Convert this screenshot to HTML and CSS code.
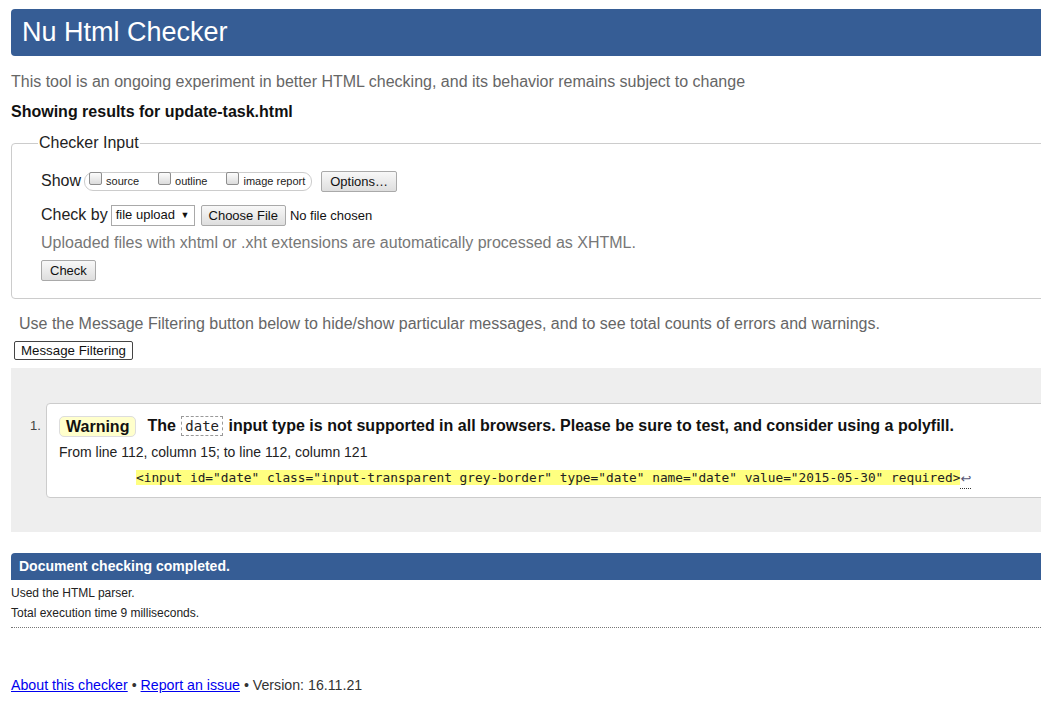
FILE: index.html
```html
<!DOCTYPE html>
<html lang="en">
<head>
<meta charset="utf-8">
<title>Nu Html Checker</title>
<link rel="stylesheet" href="styles.css">
</head>
<body>
<div class="page">
  <h1 class="title">Nu Html Checker</h1>
  <p class="intro">This tool is an ongoing experiment in better HTML checking, and its behavior remains subject to change</p>
  <p class="showing">Showing results for update-task.html</p>

  <fieldset class="input-box">
    <legend>Checker Input</legend>
    <div class="row show-row">
      <span class="lbl">Show</span>
      <span class="opts">
        <span class="opt"><span class="cb"></span>source</span>
        <span class="opt"><span class="cb"></span>outline</span>
        <span class="opt"><span class="cb"></span>image report</span>
      </span>
      <span class="btn">Options…</span>
    </div>
    <div class="row by-row">
      <span class="lbl">Check by</span>
      <span class="select">file upload <span class="arrow">▼</span></span>
      <span class="btn choose">Choose File</span>
      <span class="nofile">No file chosen</span>
    </div>
    <p class="hint">Uploaded files with xhtml or .xht extensions are automatically processed as XHTML.</p>
    <span class="btn check">Check</span>
  </fieldset>

  <p class="filter-note">Use the Message Filtering button below to hide/show particular messages, and to see total counts of errors and warnings.</p>
  <span class="btn-filter">Message Filtering</span>

  <div class="results">
    <div class="item">
      <span class="num">1.</span>
      <div class="card">
        <p class="msg"><span class="badge">Warning</span> <span class="msg-text">The <code class="tag">date</code> input type is not supported in all browsers. Please be sure to test, and consider using a polyfill.</span></p>
        <p class="loc">From line 112, column 15; to line 112, column 121</p>
        <p class="extract"><span class="hl">&lt;input id="date" class="input-transparent grey-border" type="date" name="date" value="2015-05-30" required&gt;</span><span class="ret">↩</span></p>
      </div>
    </div>
  </div>

  <div class="done">Document checking completed.</div>
  <p class="stat">Used the HTML parser.</p>
  <p class="stat">Total execution time 9 milliseconds.</p>
  <div class="dots"></div>

  <p class="footer"><a href="#">About this checker</a> • <a href="#">Report an issue</a> • Version: 16.11.21</p>
</div>
</body>
</html>
```

FILE: styles.css
```css
html, body {
  margin: 0;
  padding: 0;
  overflow: hidden;
  background: #fff;
}

body {
  font-family: "Liberation Sans", Arial, sans-serif;
  color: #222;
}

.page {
  width: 1080px;
  margin-left: 11px;
  padding-top: 9px;
}

.title {
  margin: 0;
  height: 47px;
  line-height: 47px;
  padding-left: 11px;
  background: #365d95;
  color: #fff;
  font-size: 27px;
  font-weight: normal;
  border-radius: 4px;
}

.intro {
  margin: 17px 0 0;
  font-size: 16px;
  line-height: 18px;
  color: #666;
}

.showing {
  margin: 12px 0 0;
  font-size: 16px;
  line-height: 18px;
  font-weight: bold;
  color: #111;
}

.input-box {
  margin: 13px 0 0;
  padding: 8px 0 17px 29px;
  border: 1px solid #ccc;
  border-radius: 4px;
}

.input-box legend {
  font-size: 16px;
  color: #222;
  padding: 0 1px;
  margin-left: -3px;
  line-height: 18px;
}

.row {
  display: flex;
  align-items: center;
  font-size: 16px;
  color: #222;
}

.show-row {
  height: 22px;
  margin-top: 10px;
}

.lbl {
  margin-right: 3px;
}

.opts {
  display: inline-flex;
  align-items: center;
  height: 17px;
  border: 1px solid #ccc;
  border-radius: 9px;
  padding: 0 6px 0 4px;
  gap: 19px;
  margin-right: 9px;
}

.opt {
  display: inline-flex;
  align-items: center;
  font-size: 11px;
  color: #222;
  gap: 4px;
}

.cb {
  display: inline-block;
  width: 11px;
  height: 11px;
  border: 1px solid #8e8e8e;
  border-radius: 2px;
  background: linear-gradient(#fcfcfc, #dcdcdc);
  position: relative;
  top: -3px;
}

.btn {
  display: inline-block;
  font-size: 13px;
  line-height: 19px;
  padding: 0 8px;
  border: 1px solid #a9a9a9;
  border-radius: 2px;
  background: linear-gradient(#f8f8f8, #dedede);
  color: #111;
}

.by-row {
  height: 22px;
  margin-top: 12px;
}

.select {
  display: inline-block;
  font-size: 13px;
  line-height: 17px;
  border: 1px solid #a9a9a9;
  background: #fff;
  padding: 0 4px;
  margin-right: 6px;
  color: #111;
}

.arrow {
  font-size: 9px;
  margin-left: 2px;
  position: relative;
  top: -1px;
}

.choose {
  margin-right: 4px;
  padding: 0 7px;
}

.nofile {
  font-size: 13px;
  color: #111;
}

.hint {
  margin: 8px 0 0;
  font-size: 16px;
  line-height: 18px;
  color: #777;
}

.check {
  margin-top: 8px;
}

.filter-note {
  margin: 16px 0 0 8px;
  font-size: 16px;
  line-height: 18px;
  color: #666;
}

.btn-filter {
  display: inline-block;
  margin: 8px 0 0 3px;
  font-size: 13.3px;
  line-height: 17px;
  padding: 0 6px;
  border: 1px solid #444;
  border-radius: 2px;
  background: #fff;
  color: #111;
}

.results {
  margin-top: 8px;
  background: #eee;
  padding: 35px 0 34px 19px;
}

.item {
  display: flex;
  align-items: flex-start;
}

.num {
  width: 16px;
  font-size: 13px;
  line-height: 16px;
  color: #444;
  margin-top: 15px;
}

.card {
  flex: 1;
  background: #fff;
  border: 1px solid #ccc;
  border-radius: 4px;
  padding: 11px 0 8px 12px;
}

.msg {
  margin: 0;
  font-size: 16px;
  line-height: 22px;
  font-weight: bold;
  color: #111;
  display: flex;
  align-items: center;
}

.badge {
  display: inline-block;
  background: #ffffcc;
  border: 1px solid #ddd;
  border-radius: 5px;
  padding: 0 6px;
  line-height: 19px;
  margin-right: 11px;
}

.tag {
  font-family: "DejaVu Sans Mono", "Liberation Mono", monospace;
  font-weight: normal;
  font-size: 14px;
  border: 1px dashed #999;
  padding: 1px 3px;
  margin: 0 1px;
  color: #222;
}

.loc {
  margin: 7px 0 0;
  font-size: 14px;
  line-height: 16px;
  color: #222;
}

.extract {
  margin: 9px 0 0 77px;
  font-family: "DejaVu Sans Mono", "Liberation Mono", monospace;
  font-size: 12.8px;
  line-height: 18px;
  color: #222;
}

.hl {
  background: #ffff80;
}

.ret {
  display: inline-block;
  border-bottom: 1px dotted #333;
  color: #557;
  font-family: "DejaVu Sans", sans-serif;
  font-size: 13px;
  line-height: 19px;
  vertical-align: top;
}

.done {
  margin-top: 21px;
  height: 27px;
  line-height: 27px;
  background: #365d95;
  color: #fff;
  font-size: 14px;
  font-weight: bold;
  padding-left: 8px;
  border-radius: 4px 4px 0 0;
}

.stat {
  margin: 6px 0 0;
  font-size: 12px;
  line-height: 15px;
  color: #222;
}

.stat + .stat {
  margin-top: 5px;
}

.dots {
  margin-top: 6px;
  border-top: 1px dotted #777;
}

.footer {
  margin: 49px 0 0;
  font-size: 14.2px;
  line-height: 16px;
  color: #333;
}

.footer a {
  color: #00e;
  text-decoration: underline;
}
```
